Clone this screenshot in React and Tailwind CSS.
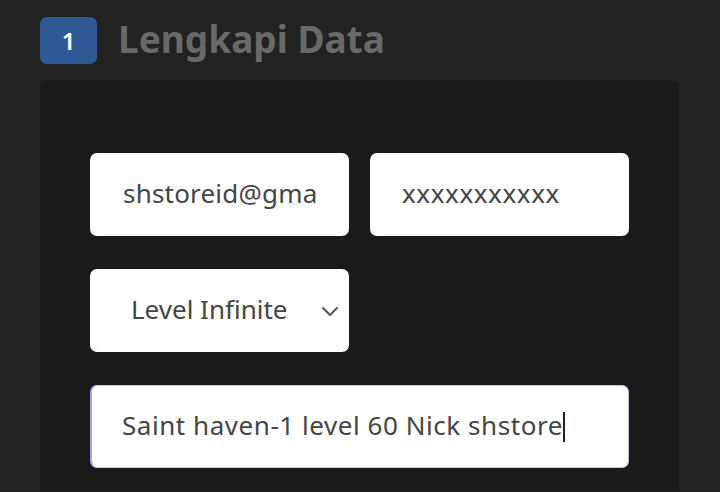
import React from "react";

export default function App() {
  return (
    <div
      className="w-[720px] h-[492px] overflow-hidden bg-[#222222]"
      style={{ fontFamily: "'Noto Sans', 'Open Sans', sans-serif" }}
    >
      {/* Header */}
      <div className="flex items-center gap-[21px] pl-[40px] pt-[17px]">
        <div className="w-[57px] h-[47px] rounded-[7px] bg-[#2e5994] flex items-center justify-center text-white text-[24px] font-semibold">
          1
        </div>
        <h2 className="text-[37px] font-bold text-[#696969] leading-none pb-[4px]">
          Lengkapi Data
        </h2>
      </div>

      {/* Panel */}
      <div className="ml-[40px] mt-[16px] w-[639px] h-[420px] rounded-t-[6px] bg-[#1a1a1a] px-[50px] pt-[73px]">
        <div className="flex gap-[21px]">
          <div className="w-[259px] h-[83px] rounded-[7px] bg-white flex items-center pl-[33px] pb-[2px] text-[26px] tracking-[0.2px] text-[#454545] overflow-hidden whitespace-nowrap">
            shstoreid@gma
          </div>
          <div className="w-[259px] h-[83px] rounded-[7px] bg-white flex items-center pl-[32px] pb-[2px] text-[26px] tracking-[0.6px] text-[#454545] overflow-hidden whitespace-nowrap">
            xxxxxxxxxxx
          </div>
        </div>

        <div className="mt-[33px] w-[259px] h-[83px] rounded-[7px] bg-white flex items-center pl-[41px] pr-[10px] text-[26px] text-[#454545]">
          <span className="flex-1 pb-[2px]">Level Infinite</span>
          <svg width="18" height="12" viewBox="0 0 18 12" fill="none">
            <path d="M2 3l7 7 7-7" stroke="#555" strokeWidth="2" strokeLinecap="round" strokeLinejoin="round" />
          </svg>
        </div>

        <div className="mt-[33px] w-[539px] h-[83px] rounded-[7px] bg-white border border-l-[2px] border-[#c9c5f3] border-l-[#a9a3ee] flex items-center pl-[30px] text-[26px] tracking-[0.55px] text-[#454545] whitespace-nowrap">
          <span className="pb-[2px]">Saint haven-1 level 60 Nick shstore</span>
          <span className="w-[2px] h-[30px] bg-[#222] mt-[1px]" />
        </div>
      </div>
    </div>
  );
}
